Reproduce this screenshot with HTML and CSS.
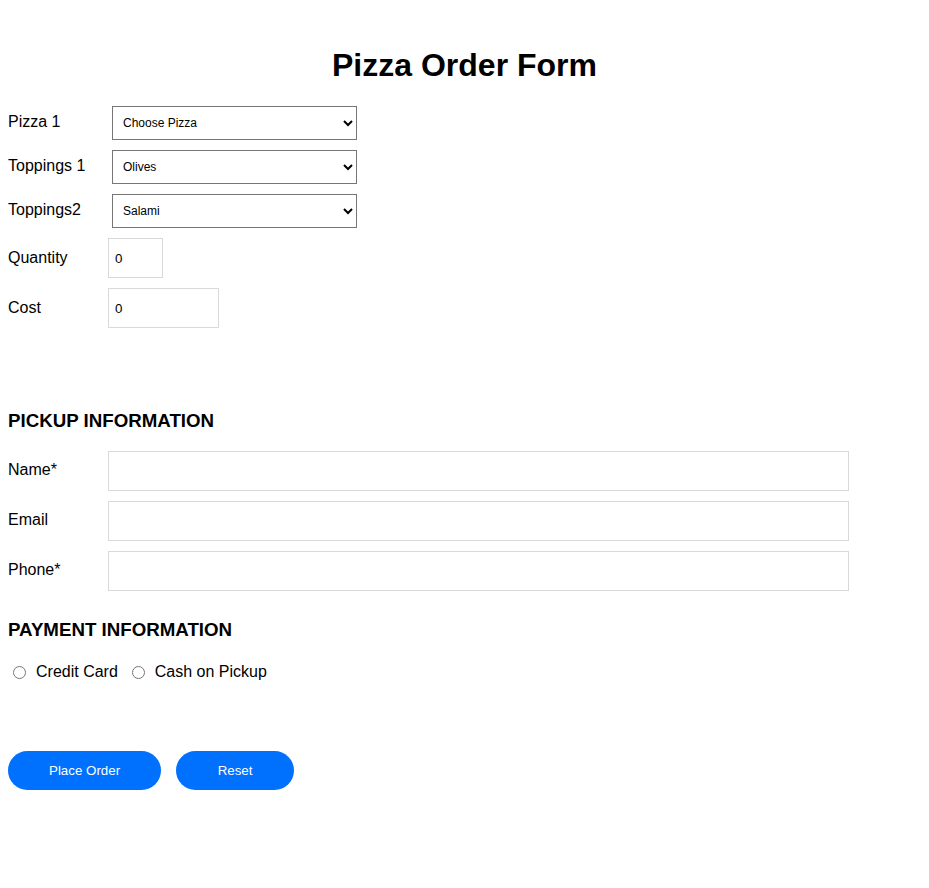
FILE: index.html
```html
<!DOCTYPE html>
<html lang="en">
<head>
<meta charset="utf-8">
<title>Pizza Order Form</title>
<link rel="stylesheet" href="styles.css">
</head>
<body>
<form class="order-form">
  <h1 class="title">Pizza Order Form</h1>

  <div class="row select-row">
    <label class="label label-select" for="pizza">Pizza 1</label>
    <select id="pizza" class="select">
      <option>Choose Pizza</option>
      <option>Margherita</option>
      <option>Pepperoni</option>
    </select>
  </div>
  <div class="row select-row">
    <label class="label label-select" for="top1">Toppings 1</label>
    <select id="top1" class="select">
      <option>Olives</option>
      <option>Mushrooms</option>
    </select>
  </div>
  <div class="row select-row">
    <label class="label label-select" for="top2">Toppings2</label>
    <select id="top2" class="select">
      <option>Salami</option>
      <option>Ham</option>
    </select>
  </div>
  <div class="row input-row">
    <label class="label" for="qty">Quantity</label>
    <input id="qty" class="input input-qty" type="text" value="0">
  </div>
  <div class="row input-row">
    <label class="label" for="cost">Cost</label>
    <input id="cost" class="input input-cost" type="text" value="0">
  </div>

  <h3 class="section pickup">PICKUP INFORMATION</h3>
  <div class="row input-row">
    <label class="label" for="name">Name*</label>
    <input id="name" class="input input-wide" type="text">
  </div>
  <div class="row input-row">
    <label class="label" for="email">Email</label>
    <input id="email" class="input input-wide" type="text">
  </div>
  <div class="row input-row">
    <label class="label" for="phone">Phone*</label>
    <input id="phone" class="input input-wide" type="text">
  </div>

  <h3 class="section payment">PAYMENT INFORMATION</h3>
  <div class="radio-row">
    <input id="cc" class="radio" type="radio" name="pay">
    <label class="radio-label" for="cc">Credit Card</label>
    <input id="cash" class="radio" type="radio" name="pay">
    <label class="radio-label" for="cash">Cash on Pickup</label>
  </div>

  <div class="buttons">
    <button type="button" class="btn">Place Order</button>
    <button type="reset" class="btn btn-reset">Reset</button>
  </div>
</form>
</body>
</html>
```

FILE: styles.css
```css
html, body {
  margin: 0;
  padding: 0;
  background: #ffffff;
}

body {
  padding: 8px;
  font-family: "Liberation Sans", Arial, sans-serif;
  font-size: 16px;
  color: #000;
}

.order-form {
  display: flex;
  flex-direction: column;
  align-items: flex-start;
}

.title {
  align-self: stretch;
  text-align: center;
  font-size: 32px;
  font-weight: bold;
  margin: 39px 0 22px 0;
}

.row {
  display: flex;
  align-items: baseline;
  margin-bottom: 10px;
}

.label {
  width: 100px;
  flex: none;
  font-size: 16px;
}

.label-select {
  width: 104px;
}

.select {
  width: 245px;
  height: 34px;
  box-sizing: border-box;
  border: 1px solid #767676;
  border-radius: 0;
  background: #fff;
  font-family: "Liberation Sans", Arial, sans-serif;
  font-size: 12px;
  color: #000;
  padding: 0 0 0 6px;
  margin: 0;
}

.input {
  height: 40px;
  box-sizing: border-box;
  border: 1px solid #d9d9d9;
  border-radius: 0;
  padding: 0 6px;
  margin: 0;
  font-family: "Liberation Sans", Arial, sans-serif;
  font-size: 13.33px;
  color: #000;
  outline: none;
}

.input-qty {
  width: 55px;
}

.input-cost {
  width: 111px;
}

.input-wide {
  width: 741px;
}

.section {
  font-size: 18.72px;
  font-weight: bold;
  margin: 0 0 19px 0;
  line-height: 21.5px;
}

.pickup {
  margin-top: 72px;
}

.payment {
  margin-top: 18px;
}

.radio-row {
  display: flex;
  align-items: center;
  height: 18.4px;
  margin-top: 4px;
}

.radio {
  width: 13px;
  height: 13px;
  margin: 1px 0 0 5px;
}

.radio-label {
  margin-left: 10px;
  margin-right: 9px;
}

.buttons {
  display: flex;
  gap: 15px;
  margin-top: 70px;
}

.btn {
  background: #0070ff;
  color: #fff;
  border: none;
  border-radius: 20px;
  padding: 12px 41px;
  font-family: "Liberation Sans", Arial, sans-serif;
  font-size: 13.33px;
  line-height: 15px;
  cursor: pointer;
}

.btn-reset {
  padding: 12px 41.5px;
}
```
